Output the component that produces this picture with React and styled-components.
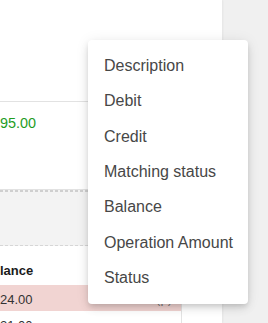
import styled, { createGlobalStyle } from 'styled-components';

const GlobalStyle = createGlobalStyle`
  html, body {
    margin: 0;
    padding: 0;
    background: #f0f0f0;
    font-family: "Liberation Sans", Arial, sans-serif;
  }
`;

const columns = [
  'Description',
  'Debit',
  'Credit',
  'Matching status',
  'Balance',
  'Operation Amount',
  'Status',
];

const rows = [
  { id: 1, balance: '24.00', note: '(p)', flagged: true },
  { id: 2, balance: '21.00', note: '', flagged: false },
];

const App = () => {
  return (
    <Page>
      <GlobalStyle />
      <Panel>
        <TopBar />
        <Amount>95.00</Amount>
        <DropZone />
        <Table>
          <HeadRow>
            <HeadCell>lance</HeadCell>
          </HeadRow>
          {rows.map((row) => (
            <Row key={row.id} $flagged={row.flagged}>
              <Cell>{row.balance}</Cell>
              <Note>{row.note}</Note>
            </Row>
          ))}
        </Table>
      </Panel>
      <Menu>
        {columns.map((c) => (
          <MenuItem key={c}>{c}</MenuItem>
        ))}
      </Menu>
    </Page>
  );
};

const Page = styled.div`
  position: relative;
  display: flex;
  width: 268px;
  height: 323px;
  overflow: hidden;
  background: #f0f0f0;
`;

const Panel = styled.main`
  width: 222px;
  height: 100%;
  background: #fff;
  box-shadow: 1px 0 2px rgba(0, 0, 0, 0.05);
  display: flex;
  flex-direction: column;
`;

const TopBar = styled.div`
  height: 101px;
  border-bottom: 1px solid #e2e2e2;
  flex-shrink: 0;
`;

const Amount = styled.div`
  height: 76px;
  padding-top: 11px;
  font-size: 14.4px;
  line-height: 20px;
  color: #1f9d1f;
  flex-shrink: 0;
`;

const DropZone = styled.div`
  height: 57px;
  flex-shrink: 0;
  background-color: #f3f3f3;
  background-image: linear-gradient(#e2e2e2, #e2e2e2),
    repeating-linear-gradient(90deg, #cfcfcf 0 3px, transparent 3px 5px),
    repeating-linear-gradient(90deg, #d6d6d6 0 3px, transparent 3px 5px);
  background-size: 100% 1px, 100% 2px, 100% 1px;
  background-position: 0 0, 0 1px, 0 100%;
  background-repeat: no-repeat;
`;

const Table = styled.div`
  width: 182px;
  border-right: 1px solid #e3e3e3;
  box-sizing: border-box;
  flex: 1;
`;

const HeadRow = styled.div`
  height: 39px;
  display: flex;
  align-items: flex-end;
  padding-bottom: 6px;
  box-sizing: border-box;
`;

const HeadCell = styled.div`
  font-size: 13px;
  line-height: 16px;
  font-weight: 700;
  color: #1a1a1a;
`;

const Row = styled.div`
  height: 26px;
  display: flex;
  justify-content: space-between;
  align-items: center;
  padding-right: 9px;
  background: ${(p) => (p.$flagged ? '#f1d4d2' : '#fff')};
`;

const Cell = styled.div`
  font-size: 13px;
  line-height: 16px;
  color: #333;
  margin-top: 3px;
`;

const Note = styled.div`
  font-size: 13px;
  color: #777;
`;

const Menu = styled.ul`
  position: absolute;
  left: 88px;
  top: 40px;
  width: 160px;
  margin: 0;
  padding: 8px 0;
  list-style: none;
  background: #fff;
  border-radius: 4px;
  box-shadow: 0 3px 5px -1px rgba(0, 0, 0, 0.12),
    0 5px 10px 0 rgba(0, 0, 0, 0.08), 0 1px 14px 0 rgba(0, 0, 0, 0.08);
`;

const MenuItem = styled.li`
  padding: 6px 16px;
  font-size: 16px;
  line-height: 23.36px;
  color: #474747;
  white-space: nowrap;
`;

export default App;
